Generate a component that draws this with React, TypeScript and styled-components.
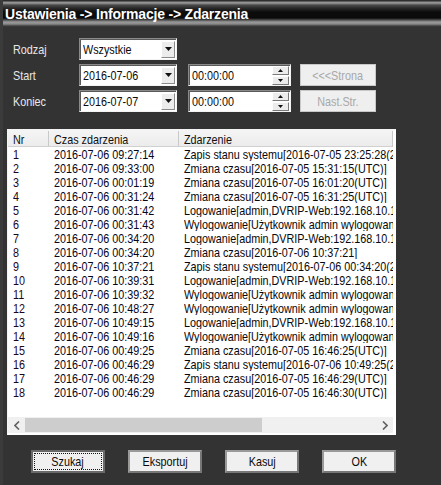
import React from 'react'
import styled, { createGlobalStyle } from 'styled-components'

const GlobalStyle = createGlobalStyle`
  html, body {
    margin: 0;
    padding: 0;
    background: #333333;
  }
  body {
    font-family: "Liberation Sans", Arial, sans-serif;
  }
`

const UI_FONT = `"Liberation Sans", Arial, sans-serif`

const Window = styled.div`
  width: 441px;
  height: 485px;
  background: #333333;
  display: flex;
  flex-direction: column;
  overflow: hidden;
  border-left: 3px solid #3b3b3b;
  box-sizing: border-box;
`

const TitleBar = styled.div`
  height: 27px;
  flex: none;
  margin-left: -3px;
  padding-left: 5px;
  display: flex;
  align-items: center;
  background: linear-gradient(
    to bottom,
    #2e2e2e 0px,
    #2e2e2e 1px,
    #8c8c8c 2px,
    #9a9a9a 3px,
    #4a4a4a 5px,
    #2a2a2a 8px,
    #0c0c0c 12px,
    #0a0a0a 18px,
    #4d4d4d 20px,
    #9a9a9a 22px,
    #8a8a8a 24px,
    #3e3e3e 26px,
    #333333 27px
  );
`

const Title = styled.span`
  color: #ffffff;
  font-family: ${UI_FONT};
  font-weight: bold;
  font-size: 14px;
  letter-spacing: -0.2px;
  margin-top: 1px;
`

// the dialog uses a tall, narrow system font; squeeze Liberation Sans to match
const Txt = styled.span<{ $center?: boolean }>`
  display: inline-block;
  white-space: nowrap;
  font-family: ${UI_FONT};
  font-size: 13px;
  transform: scaleX(0.83);
  transform-origin: ${p => (p.$center ? 'center' : 'left')} center;
`

const Form = styled.div`
  display: grid;
  grid-template-columns: 55px 98px 103px 74px;
  grid-auto-rows: 22px;
  column-gap: 11px;
  row-gap: 4px;
  padding: 11px 0 0 10px;
  align-items: center;
`

const Label = styled.div<{ $row: number }>`
  grid-column: 1;
  grid-row: ${p => p.$row};
  color: #e8e8e8;
`

const Field = styled.div<{ $col: number; $row: number }>`
  grid-column: ${p => p.$col};
  grid-row: ${p => p.$row};
  height: 22px;
  box-sizing: border-box;
  background: #ffffff;
  border: 1px solid;
  border-color: #8a8a8a #f4f4f4 #f4f4f4 #8a8a8a;
  box-shadow: inset 1px 1px 0 #5a5a5a;
  display: flex;
  align-items: center;
  padding: 0 1px 0 3px;
`

const FieldText = styled.div`
  flex: 1;
  color: #0a0a0a;
  overflow: hidden;
`

const DropButton = styled.div`
  width: 14px;
  height: 17px;
  background: #ececec;
  border: 1px solid;
  border-color: #ffffff #8a8a8a #8a8a8a #ffffff;
  box-sizing: border-box;
  display: flex;
  align-items: center;
  justify-content: center;
`

const SpinStack = styled.div`
  width: 17px;
  display: flex;
  flex-direction: column;
  gap: 1px;
`

const SpinButton = styled.div`
  height: 9px;
  background: #ececec;
  border: 1px solid;
  border-color: #ffffff #7a7a7a #7a7a7a #ffffff;
  box-sizing: border-box;
  display: flex;
  align-items: center;
  justify-content: center;
`

const PageButton = styled.div<{ $row: number }>`
  grid-column: 4;
  grid-row: ${p => p.$row};
  margin-left: -2px;
  height: 22px;
  box-sizing: border-box;
  background: #efefef;
  border: 1px solid #c8c8c8;
  display: flex;
  align-items: center;
  justify-content: center;
  color: #a8a8a8;
`

const ListBox = styled.div`
  margin: 17px 0 0 4px;
  width: 389px;
  height: 306px;
  box-sizing: border-box;
  background: #ffffff;
  border-top: 2px solid #f4f4f4;
  border-left: 1px solid #f4f4f4;
  border-right: 3px solid #ffffff;
  border-bottom: 2px solid #ffffff;
  display: flex;
  flex-direction: column;
  overflow: hidden;
`

const Header = styled.div`
  display: grid;
  grid-template-columns: 41px 130px 1fr;
  height: 16px;
  flex: none;
`

const HeaderCell = styled.div`
  background: linear-gradient(#f4f4f4, #ececec);
  border-right: 1px solid #c9c9c9;
  border-bottom: 1px solid #d0d0d0;
  color: #111111;
  padding-left: 5px;
  line-height: 16px;
  overflow: hidden;
`

const Rows = styled.div`
  flex: 1;
`

const Row = styled.div`
  display: grid;
  grid-template-columns: 41px 130px 1fr;
  height: 14px;
  line-height: 14px;
`

const Cell = styled.div<{ $tone?: string }>`
  padding-left: 5px;
  color: ${p => p.$tone || '#08080c'};
  overflow: hidden;
`

const HScroll = styled.div`
  height: 16px;
  flex: none;
  background: #f0f0f0;
  display: flex;
  align-items: stretch;
`

const ScrollArrow = styled.div`
  width: 17px;
  display: flex;
  align-items: center;
  justify-content: center;
`

const ScrollTrack = styled.div`
  flex: 1;
  padding: 1px 0;
  display: flex;
`

const ScrollThumb = styled.div`
  width: 237px;
  background: #cdcdcd;
`

const ButtonBar = styled.div`
  display: flex;
  gap: 23px;
  padding: 15px 0 0 28px;
`

const DialogButton = styled.div<{ $focused?: boolean }>`
  width: 74px;
  height: 23px;
  box-sizing: border-box;
  background: #f0f0f0;
  border: 2px solid ${p => (p.$focused ? '#6a6a6a' : '#777777')};
  border-top-color: ${p => (p.$focused ? '#6a6a6a' : '#9a9a9a')};
  border-left-color: ${p => (p.$focused ? '#6a6a6a' : '#9a9a9a')};
  display: flex;
  align-items: center;
  justify-content: center;
  padding: 1px;
`

const ButtonInner = styled.div<{ $focused?: boolean }>`
  width: 100%;
  height: 100%;
  box-sizing: border-box;
  border: 1px dotted ${p => (p.$focused ? '#111111' : 'transparent')};
  display: flex;
  align-items: center;
  justify-content: center;
  color: #0a0a0a;
`

const DownTriangle = () => (
  <svg width="7" height="4" viewBox="0 0 7 4">
    <path d="M0 0 H7 L3.5 4 Z" fill="#111" />
  </svg>
)

const TinyUp = () => (
  <svg width="5" height="3" viewBox="0 0 5 3">
    <path d="M0 3 H5 L2.5 0 Z" fill="#111" />
  </svg>
)

const TinyDown = () => (
  <svg width="5" height="3" viewBox="0 0 5 3">
    <path d="M0 0 H5 L2.5 3 Z" fill="#111" />
  </svg>
)

const Chevron = ({ dir }: { dir: 'left' | 'right' }) => (
  <svg width="6" height="9" viewBox="0 0 6 9">
    <path
      d={dir === 'left' ? 'M5 0.5 L1 4.5 L5 8.5' : 'M1 0.5 L5 4.5 L1 8.5'}
      stroke="#606060"
      strokeWidth="1.6"
      fill="none"
    />
  </svg>
)

const events: [string, string][] = [
  ['2016-07-06 09:27:14', 'Zapis stanu systemu[2016-07-05 23:25:28(2)]'],
  ['2016-07-06 09:33:00', 'Zmiana czasu[2016-07-05 15:31:15(UTC)]'],
  ['2016-07-06 00:01:19', 'Zmiana czasu[2016-07-05 16:01:20(UTC)]'],
  ['2016-07-06 00:31:24', 'Zmiana czasu[2016-07-05 16:31:25(UTC)]'],
  ['2016-07-06 00:31:42', 'Logowanie[admin,DVRIP-Web:192.168.10.100]'],
  ['2016-07-06 00:31:43', 'Wylogowanie[Użytkownik admin wylogowany]'],
  ['2016-07-06 00:34:20', 'Logowanie[admin,DVRIP-Web:192.168.10.100]'],
  ['2016-07-06 00:34:20', 'Zmiana czasu[2016-07-06 10:37:21]'],
  ['2016-07-06 10:37:21', 'Zapis stanu systemu[2016-07-06 00:34:20(2)]'],
  ['2016-07-06 10:39:31', 'Logowanie[admin,DVRIP-Web:192.168.10.100]'],
  ['2016-07-06 10:39:32', 'Wylogowanie[Użytkownik admin wylogowany]'],
  ['2016-07-06 10:48:27', 'Wylogowanie[Użytkownik admin wylogowany]'],
  ['2016-07-06 10:49:15', 'Logowanie[admin,DVRIP-Web:192.168.10.100]'],
  ['2016-07-06 10:49:16', 'Wylogowanie[Użytkownik admin wylogowany]'],
  ['2016-07-06 00:49:25', 'Zmiana czasu[2016-07-05 16:46:25(UTC)]'],
  ['2016-07-06 00:46:29', 'Zapis stanu systemu[2016-07-06 10:49:25(2)]'],
  ['2016-07-06 00:46:29', 'Zmiana czasu[2016-07-05 16:46:29(UTC)]'],
  ['2016-07-06 00:46:29', 'Zmiana czasu[2016-07-05 16:46:30(UTC)]']
]

function Combo({ col, row, value }: { col: number; row: number; value: string }) {
  return (
    <Field $col={col} $row={row}>
      <FieldText>
        <Txt>{value}</Txt>
      </FieldText>
      <DropButton>
        <DownTriangle />
      </DropButton>
    </Field>
  )
}

function TimeBox({ row }: { row: number }) {
  return (
    <Field $col={3} $row={row}>
      <FieldText>
        <Txt>00:00:00</Txt>
      </FieldText>
      <SpinStack>
        <SpinButton>
          <TinyUp />
        </SpinButton>
        <SpinButton>
          <TinyDown />
        </SpinButton>
      </SpinStack>
    </Field>
  )
}

const buttons = ['Szukaj', 'Eksportuj', 'Kasuj', 'OK']

export default function App() {
  return (
    <Window>
      <GlobalStyle />
      <TitleBar>
        <Title>Ustawienia -&gt; Informacje -&gt; Zdarzenia</Title>
      </TitleBar>

      <Form>
        <Label $row={1}>
          <Txt>Rodzaj</Txt>
        </Label>
        <Combo col={2} row={1} value="Wszystkie" />

        <Label $row={2}>
          <Txt>Start</Txt>
        </Label>
        <Combo col={2} row={2} value="2016-07-06" />
        <TimeBox row={2} />
        <PageButton $row={2}>
          <Txt $center>&lt;&lt;&lt;Strona</Txt>
        </PageButton>

        <Label $row={3}>
          <Txt>Koniec</Txt>
        </Label>
        <Combo col={2} row={3} value="2016-07-07" />
        <TimeBox row={3} />
        <PageButton $row={3}>
          <Txt $center>Nast.Str.</Txt>
        </PageButton>
      </Form>

      <ListBox>
        <Header>
          <HeaderCell>
            <Txt>Nr</Txt>
          </HeaderCell>
          <HeaderCell>
            <Txt>Czas zdarzenia</Txt>
          </HeaderCell>
          <HeaderCell>
            <Txt>Zdarzenie</Txt>
          </HeaderCell>
        </Header>
        <Rows>
          {events.map(([time, text], i) => (
            <Row key={i}>
              <Cell $tone="#1e0418">
                <Txt>{i + 1}</Txt>
              </Cell>
              <Cell $tone="#04041a">
                <Txt>{time}</Txt>
              </Cell>
              <Cell>
                <Txt>{text}</Txt>
              </Cell>
            </Row>
          ))}
        </Rows>
        <HScroll>
          <ScrollArrow>
            <Chevron dir="left" />
          </ScrollArrow>
          <ScrollTrack>
            <ScrollThumb />
          </ScrollTrack>
          <ScrollArrow>
            <Chevron dir="right" />
          </ScrollArrow>
        </HScroll>
      </ListBox>

      <ButtonBar>
        {buttons.map((b, i) => (
          <DialogButton key={b} $focused={i === 0}>
            <ButtonInner $focused={i === 0}>
              <Txt $center>{b}</Txt>
            </ButtonInner>
          </DialogButton>
        ))}
      </ButtonBar>
    </Window>
  )
}
